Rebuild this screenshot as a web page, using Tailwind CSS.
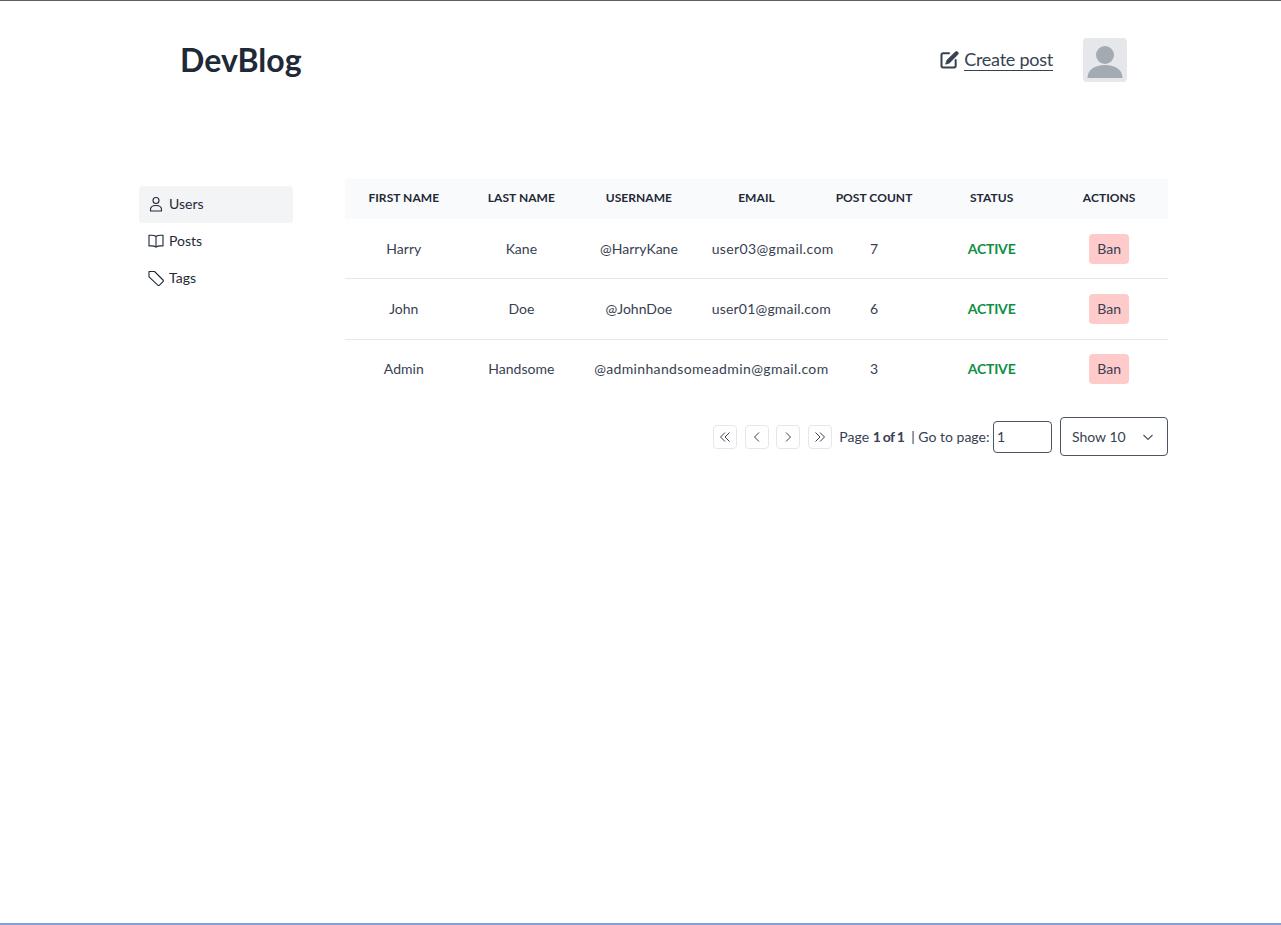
<!DOCTYPE html>
<html lang="en">
<head>
<meta charset="utf-8">
<title>DevBlog</title>
<script src="https://cdn.jsdelivr.net/npm/@tailwindcss/browser@4"></script>
</head>
<body class="bg-white font-['Lato','Noto_Sans',sans-serif] text-[#374151]">
<div class="h-[925px] flex flex-col border-t border-t-[#5f5f5f] border-b-2 border-b-[#7f9fe0] overflow-hidden">
  <header class="flex justify-between pl-[180px] pr-[154px] pt-[37px] h-[178px] items-start">
    <a class="text-[32px] leading-[44px] font-bold text-[#1f2937] tracking-[0.05px]">DevBlog</a>
    <div class="flex items-center gap-[30px]">
      <a class="flex items-center gap-[5px] text-[#374151] text-[18px] leading-[22px] tracking-[-0.25px] pb-[1px]">
        <svg class="w-[20px] h-[20px]" viewBox="0 0 24 24" fill="none" stroke="#374151" stroke-width="2.4" stroke-linecap="round" stroke-linejoin="round"><path d="M12 4H5a2 2 0 0 0-2 2v13a2 2 0 0 0 2 2h13a2 2 0 0 0 2-2v-7"/><path fill="#374151" stroke-width="1" d="M19.500 2.500a2.100 2.100 0 0 1 3 3L12.500 15.500 8 17l1.500-4.500z"/></svg>
        <span class="border-b border-[#374151]">Create post</span>
      </a>
      <div class="w-[44px] h-[44px] rounded bg-[#e5e7eb] overflow-hidden">
        <svg class="w-[44px] h-[44px]" viewBox="0 0 44 44"><circle cx="22" cy="17" r="9" fill="#a3aab2"/><path d="M4.500 40c0-8 7-13 17.500-13s17.500 5 17.500 13z" fill="#a3aab2"/></svg>
      </div>
    </div>
  </header>
  <main class="flex pl-[139px] gap-[52px]">
    <nav class="w-[154px] pt-[7px] flex flex-col text-[14px] text-[#1f2937]">
      <a class="flex items-center gap-[5px] h-[37px] px-[9px] pb-[2px] rounded bg-[#f3f4f6]">
        <svg class="w-[16px] h-[16px]" viewBox="0 0 16 16" fill="none" stroke="#1f2937" stroke-width="1.1"><circle cx="8" cy="4.500" r="3"/><path d="M2.500 15v-1.500C2.500 11 4.500 9.500 8 9.500s5.500 1.500 5.500 4V15z" stroke-linejoin="round"/></svg>
        Users
      </a>
      <a class="flex items-center gap-[5px] h-[37px] px-[9px] pb-[2px]">
        <svg class="w-[16px] h-[16px]" viewBox="0 0 16 16" fill="none" stroke="#1f2937" stroke-width="1.1" stroke-linejoin="round"><path d="M8 3.500C6.800 2.500 4 2 1 2.300V13c3-.3 5.800.2 7 1.200 1.200-1 4-1.500 7-1.200V2.300C12 2 9.200 2.500 8 3.500z"/><path d="M8 3.500v10.700"/></svg>
        Posts
      </a>
      <a class="flex items-center gap-[5px] h-[37px] px-[9px] pb-[2px]">
        <svg class="w-[16px] h-[16px]" viewBox="0 0 16 16" fill="none" stroke="#1f2937" stroke-width="1.1" stroke-linejoin="round"><path d="M1 1.500h5.500L15 10a1.200 1.200 0 0 1 0 1.700L11.500 15.200a1.200 1.200 0 0 1-1.700 0L1 6.800z"/></svg>
        Tags
      </a>
    </nav>
    <section class="w-[823px]">
      <table class="w-full table-fixed border-collapse text-[14px] text-center">
        <thead class="bg-[#f9fafb] text-[#1f2937] text-[12px] font-bold uppercase tracking-[0.05px]">
          <tr class="h-[40px]"><th class="pb-[2px]">First name</th><th class="pb-[2px]">Last name</th><th class="pb-[2px]">Username</th><th class="pb-[2px]">Email</th><th class="pb-[2px]">Post count</th><th class="pb-[2px]">Status</th><th class="pb-[2px]">Actions</th></tr>
        </thead>
        <tbody class="text-[#374151]">
          <tr class="h-[59px] border-b border-[#e5e7eb]"><td class="px-[14px]">Harry</td><td class="px-[14px]">Kane</td><td class="px-[14px] whitespace-nowrap">@HarryKane</td><td class="px-[14px] whitespace-nowrap tracking-[0.37px]">user03@gmail.com</td><td class="px-[14px]">7</td><td class="px-[14px] font-bold text-[#0f8f45] tracking-[-0.2px]">ACTIVE</td><td class="px-[14px] pt-[2px]"><button class="bg-[#fecaca] text-[#374151] rounded w-[40px] h-[30px] pb-[2px]">Ban</button></td></tr>
          <tr class="h-[61px] border-b border-[#e5e7eb]"><td class="px-[14px]">John</td><td class="px-[14px]">Doe</td><td class="px-[14px] whitespace-nowrap">@JohnDoe</td><td class="px-[14px] whitespace-nowrap tracking-[0.2px]">user01@gmail.com</td><td class="px-[14px]">6</td><td class="px-[14px] font-bold text-[#0f8f45] tracking-[-0.2px]">ACTIVE</td><td class="px-[14px]"><button class="bg-[#fecaca] text-[#374151] rounded w-[40px] h-[30px]">Ban</button></td></tr>
          <tr class="h-[58px]"><td class="px-[14px]">Admin</td><td class="px-[14px]">Handsome</td><td class="px-[14px] whitespace-nowrap tracking-[0.35px]">@adminhandsome</td><td class="px-[14px] whitespace-nowrap tracking-[0.4px]">admin@gmail.com</td><td class="px-[14px]">3</td><td class="px-[14px] font-bold text-[#0f8f45] tracking-[-0.2px]">ACTIVE</td><td class="px-[14px] pt-[2px]"><button class="bg-[#fecaca] text-[#374151] rounded w-[40px] h-[30px] pb-[2px]">Ban</button></td></tr>
        </tbody>
      </table>
      <div class="flex items-center justify-end mt-[20px] text-[14px] text-[#374151]">
        <button class="w-[24px] h-[24px] rounded border border-[#e5e7eb] flex items-center justify-center"><svg class="w-[14px] h-[14px]" viewBox="0 0 14 14" fill="none" stroke="#374151" stroke-width="1"><path d="M7 2.500 2.500 7 7 11.500M11.500 2.500 7 7l4.500 4.500"/></svg></button>
        <button class="ml-[8px] w-[24px] h-[24px] rounded border border-[#e5e7eb] flex items-center justify-center"><svg class="w-[14px] h-[14px]" viewBox="0 0 14 14" fill="none" stroke="#374151" stroke-width="1"><path d="M9 2.500 4.500 7 9 11.500"/></svg></button>
        <button class="ml-[7px] w-[24px] h-[24px] rounded border border-[#e5e7eb] flex items-center justify-center"><svg class="w-[14px] h-[14px]" viewBox="0 0 14 14" fill="none" stroke="#374151" stroke-width="1"><path d="M5 2.500 9.500 7 5 11.500"/></svg></button>
        <button class="ml-[8px] w-[24px] h-[24px] rounded border border-[#e5e7eb] flex items-center justify-center"><svg class="w-[14px] h-[14px]" viewBox="0 0 14 14" fill="none" stroke="#374151" stroke-width="1"><path d="M2.500 2.500 7 7l-4.500 4.500M7 2.500 11.500 7 7 11.500"/></svg></button>
        <span class="ml-[7px] whitespace-pre">Page <b class="tracking-[-0.7px]">1 of 1</b>  | Go to page: </span>
        <input class="w-[59px] h-[32px] rounded border border-[#4b5563] px-[3px] text-[14px]" value="1">
        <div class="ml-[8px] w-[108px] h-[39px] rounded border border-[#4b5563] flex items-center justify-between pl-[11px] pr-[12px]">
          <span>Show 10</span>
          <svg class="w-[14px] h-[14px]" viewBox="0 0 14 14" fill="none" stroke="#4b5563" stroke-width="1.2"><path d="M2.500 5 7 9.500 11.500 5"/></svg>
        </div>
      </div>
    </section>
  </main>
</div>
</body>
</html>
